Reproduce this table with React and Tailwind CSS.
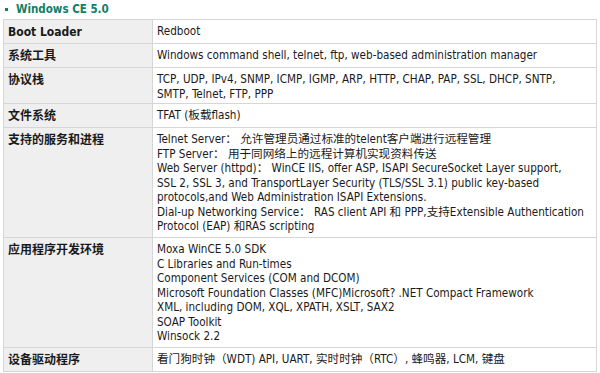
import React from "react";

const rows = [
  { label: "Boot Loader", h: "h-[24px]", lines: ["Redboot"] },
  { label: "系统工具", h: "h-[24px]", lines: ["Windows command shell, telnet, ftp, web-based administration manager"] },
  { label: "协议栈", h: "h-[36px]", lines: ["TCP, UDP, IPv4, SNMP, ICMP, IGMP, ARP, HTTP, CHAP, PAP, SSL, DHCP, SNTP,", "SMTP, Telnet, FTP, PPP"] },
  { label: "文件系统", h: "h-[24px]", lines: ["TFAT (板载flash)"] },
  {
    label: "支持的服务和进程",
    h: "h-[110px]",
    lines: [
      "Telnet Server： 允许管理员通过标准的telent客户端进行远程管理",
      "FTP Server： 用于同网络上的远程计算机实现资料传送",
      "Web Server (httpd)： WinCE IIS, offer ASP, ISAPI SecureSocket Layer support,",
      "SSL 2, SSL 3, and TransportLayer Security (TLS/SSL 3.1) public key-based",
      "protocols,and Web Administration ISAPI Extensions.",
      "Dial-up Networking Service： RAS client API 和 PPP,支持Extensible Authentication",
      "Protocol (EAP) 和RAS scripting",
    ],
  },
  {
    label: "应用程序开发环境",
    h: "h-[110px]",
    lines: [
      "Moxa WinCE 5.0 SDK",
      "C Libraries and Run-times",
      "Component Services (COM and DCOM)",
      "Microsoft Foundation Classes (MFC)Microsoft? .NET Compact Framework",
      "XML, including DOM, XQL, XPATH, XSLT, SAX2",
      "SOAP Toolkit",
      "Winsock 2.2",
    ],
  },
  { label: "设备驱动程序", h: "h-[24px]", lines: ["看门狗时钟（WDT) API, UART, 实时时钟（RTC）, 蜂鸣器, LCM, 键盘"] },
];

export default function App() {
  return (
    <div
      className="w-[600px] h-[373px] bg-white overflow-hidden"
      style={{ fontFamily: '"DejaVu Sans Condensed", "DejaVu Sans", "Noto Sans CJK SC", sans-serif' }}
    >
      <div className="flex items-center h-[19px] pl-[5px] gap-[8px]">
        <span className="w-[3px] h-[3px] bg-[#0f7f66] mt-[-1px]" />
        <span className="text-[11.5px] font-bold text-[#0f7f66] leading-[19px]">Windows CE 5.0</span>
      </div>
      <table className="ml-[3px] w-[594px] border-collapse border border-[#d6d6d6] table-fixed">
        <colgroup>
          <col className="w-[149px]" />
          <col />
        </colgroup>
        <tbody>
          {rows.map((r, i) => (
            <tr key={i} className={r.h}>
              <td className="align-top bg-[#efefef] border border-[#d6d6d6] pl-[4px] pt-[5px] text-[12px] leading-[14px] font-bold text-[#1a1a1a]">
                {r.label}
              </td>
              <td className="align-top border border-[#d6d6d6] pl-[4px] pt-[4px] text-[11.6px] leading-[14.5px] text-[#1a1a1a] whitespace-nowrap">
                {r.lines.map((l, j) => (
                  <div key={j}>{l}</div>
                ))}
              </td>
            </tr>
          ))}
        </tbody>
      </table>
    </div>
  );
}
